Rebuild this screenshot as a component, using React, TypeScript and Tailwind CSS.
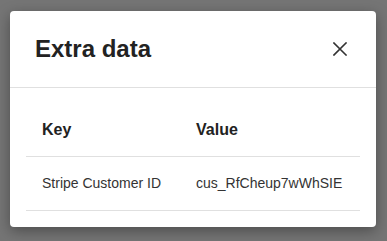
import React from "react";

export default function App() {
  return (
    <div
      className="w-[387px] h-[241px] bg-[#757575] pt-[11px] pl-[10px]"
      style={{ fontFamily: '"Liberation Sans", Arial, sans-serif' }}
    >
      <div className="w-[366px] h-[216px] bg-white rounded-[4px] shadow-[0_4px_14px_rgba(0,0,0,0.35)] flex flex-col">
        <div className="h-[77px] border-b border-[#e0e0e0] flex items-center justify-between pl-[25px] pr-[29px]">
          <h2 className="text-[24px] font-bold text-[#222222] leading-none">Extra data</h2>
          <svg width="14" height="14" viewBox="0 0 14 14" className="text-[#333333]">
            <path d="M1 1L13 13M13 1L1 13" stroke="currentColor" strokeWidth="1.6" strokeLinecap="square" />
          </svg>
        </div>
        <div className="px-[16px] pt-[15px]">
          <div className="grid grid-cols-[154px_180px] h-[54px] border-b border-[#e0e0e0] items-center text-[16px] font-bold text-[#222222]">
            <div className="pl-[16px]">Key</div>
            <div className="pl-[16px]">Value</div>
          </div>
          <div className="grid grid-cols-[154px_180px] h-[54px] border-b border-[#e0e0e0] items-center text-[14px] text-[#333333]">
            <div className="pl-[16px]">Stripe Customer ID</div>
            <div className="pl-[16px]">cus_RfCheup7wWhSIE</div>
          </div>
        </div>
      </div>
    </div>
  );
}
